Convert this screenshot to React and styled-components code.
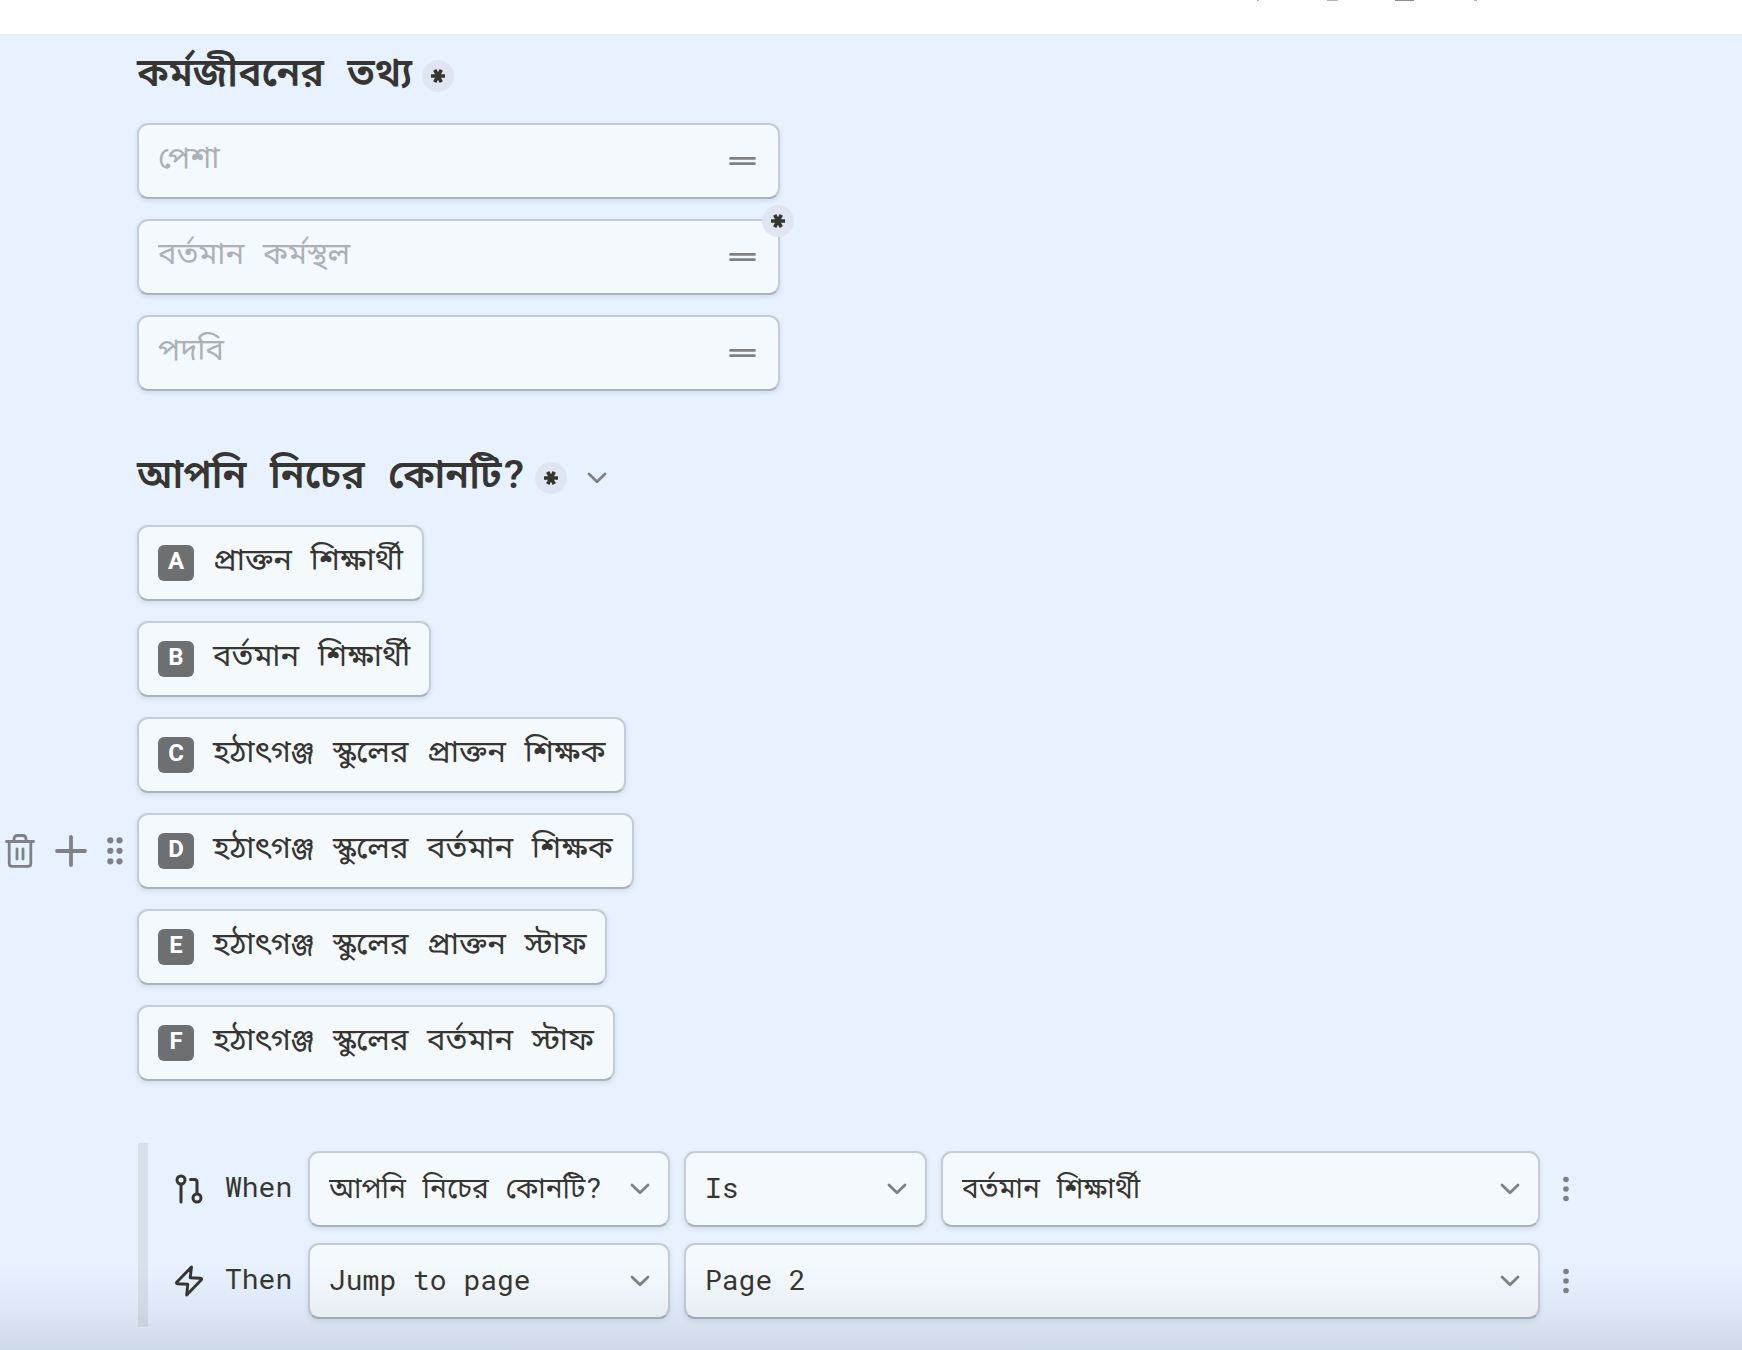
import React from "react";
import styled, { createGlobalStyle } from "styled-components";

const GlobalStyle = createGlobalStyle`
  *, *::before, *::after { box-sizing: border-box; }
  body {
    margin: 0;
    background: #e7f1ff;
    color: #37352f;
    font-family: "Roboto Mono", "Liberation Mono", "Noto Sans Bengali", "Noto Sans", monospace;
    font-size: 31px;
    line-height: 36px;
  }
  button, input, select { font: inherit; color: inherit; }
`;

const Page = styled.div`
  min-height: 100vh;
`;

const TopBar = styled.header`
  display: flex;
  justify-content: flex-end;
  align-items: flex-start;
  height: 34px;
  padding-right: 263px;
  background: #ffffff;
`;

const TopIcons = styled.svg`
  display: block;
`;

const Form = styled.main`
  padding: 14px 164px 22px 137px;
`;

const Section = styled.section`
  margin-bottom: ${(p) => p.$gap}px;
`;

const Heading = styled.div`
  display: flex;
  align-items: center;
  height: 56px;
  margin-bottom: 19px;
`;

const Title = styled.h2`
  margin: 0;
  padding-bottom: 10px;
  font-size: 39px;
  line-height: 46px;
  font-weight: 600;
  white-space: nowrap;
`;

const Required = styled.span`
  display: inline-flex;
  align-items: center;
  justify-content: center;
  width: 32px;
  height: 32px;
  margin-left: 10px;
  border-radius: 50%;
  background: #dfe6f2;
`;

const CornerRequired = styled(Required)`
  position: absolute;
  top: -16px;
  right: -16px;
  margin: 0;
`;

const IconButton = styled.button`
  display: inline-flex;
  align-items: center;
  justify-content: center;
  padding: 0;
  border: 0;
  background: none;
  color: #808182;
`;

const HeadingMenu = styled(IconButton)`
  width: 32px;
  height: 32px;
  margin-left: 14px;
`;

const Stack = styled.div`
  display: flex;
  flex-direction: column;
  align-items: flex-start;
  gap: 20px;
`;

const Card = styled.div`
  position: relative;
  display: flex;
  align-items: center;
  height: 76px;
  border: 2px solid #c4ccd6;
  border-bottom-color: #abb2ba;
  border-radius: 11px;
  background: #f4f9fe;
  box-shadow: 0 2px 5px rgba(60, 80, 110, 0.12);
`;

const Field = styled(Card)`
  width: 100%;
  max-width: 643px;
  padding: 0 22px 0 19px;
`;

const TextInput = styled.input`
  flex: 1;
  min-width: 0;
  height: 56px;
  padding: 0 0 10px;
  border: 0;
  outline: 0;
  background: none;
  &::placeholder { color: #adb1b5; opacity: 1; }
`;

const Option = styled(Card)`
  gap: 19px;
  padding: 0 19px;
`;

const Badge = styled.span`
  display: flex;
  align-items: center;
  justify-content: center;
  width: 36px;
  height: 36px;
  padding-bottom: 4px;
  border-radius: 6px;
  background: #6e6f71;
  color: #ffffff;
  font-family: Roboto, sans-serif;
  font-size: 24px;
  line-height: 28px;
  font-weight: 700;
`;

const OptionText = styled.span`
  padding-bottom: 10px;
  white-space: nowrap;
`;

const RowTools = styled.div`
  position: absolute;
  right: 100%;
  display: flex;
  align-items: center;
  gap: 20px;
  margin-right: 16px;
`;

const Logic = styled.div`
  display: flex;
  flex-direction: column;
  gap: 16px;
  margin-left: 1px;
  padding: 8px 0 8px 27px;
  border-left: 10px solid #d7e1eb;
  font-size: 28px;
`;

const Rule = styled.div`
  display: flex;
  align-items: center;
`;

const RuleLabel = styled.span`
  flex: none;
  width: 83px;
  margin-left: 22px;
  padding-bottom: 4px;
`;

const Picker = styled(Card)`
  flex: ${(p) => (p.$width ? `0 0 ${p.$width}px` : "1 1 0")};
  min-width: 0;
  margin-right: 14px;
  padding: 0 18px 0 19px;
`;

const Select = styled.select`
  flex: 1;
  min-width: 0;
  height: 48px;
  padding: 0 0 2px;
  border: 0;
  outline: 0;
  appearance: none;
  background: none;
`;

const RuleMenu = styled(IconButton)`
  flex: none;
  width: 24px;
  height: 36px;
`;

const BottomShade = styled.div`
  position: fixed;
  inset: auto 0 0 0;
  height: 84px;
  pointer-events: none;
  background: linear-gradient(rgba(80, 90, 100, 0), rgba(80, 90, 100, 0.05) 45%, rgba(80, 90, 100, 0.16));
`;

const Star = () => (
  <svg width="16" height="16" viewBox="0 0 16 16" stroke="#37352f" strokeWidth="3.6" aria-label="required" role="img">
    <path d="M1 8H15M4.7 1.8L11.3 14.2M11.3 1.8L4.7 14.2" />
  </svg>
);

const Chevron = () => (
  <svg width="20" height="12" viewBox="0 0 20 12" fill="none" stroke="#808182" strokeWidth="2.8" strokeLinecap="round" strokeLinejoin="round" aria-hidden="true">
    <path d="M2 2L10 9.7L18 2" />
  </svg>
);

const ShortText = () => (
  <svg width="27" height="8" viewBox="0 0 27 8" stroke="#808182" strokeWidth="2.7" strokeLinecap="round" aria-hidden="true">
    <path d="M1.5 1.4H25.5M1.5 6.6H25.5" />
  </svg>
);

const Trash = () => (
  <svg width="30" height="34" viewBox="0 0 30 34" fill="none" stroke="#808182" strokeWidth="2.8" strokeLinecap="round" strokeLinejoin="round">
    <path d="M1.5 7.5H28.5M4.2 7.5V29.5Q4.2 32.3 7 32.3H23Q25.8 32.3 25.8 29.5V7.5M9 7V5Q9 1.5 12.5 1.5H17.5Q21 1.5 21 5V7M12 15V25M18 15V25" />
  </svg>
);

const Plus = () => (
  <svg width="32" height="32" viewBox="0 0 32 32" stroke="#808182" strokeWidth="3.8" strokeLinecap="round">
    <path d="M16 2V30M2 16H30" />
  </svg>
);

const Grip = () => (
  <svg width="16" height="28" viewBox="0 0 16 28" fill="#808182">
    {[3.3, 13.8, 24.3].map((y) => (
      <g key={y}>
        <circle cx="3.3" cy={y} r="3.1" />
        <circle cx="12.5" cy={y} r="3.1" />
      </g>
    ))}
  </svg>
);

const Branch = () => (
  <svg width="28" height="30" viewBox="0 0 28 30" fill="none" stroke="#37352f" strokeWidth="3" strokeLinecap="round" strokeLinejoin="round" aria-hidden="true">
    <circle cx="6" cy="6" r="4" />
    <circle cx="22" cy="24" r="4" />
    <path d="M6 10.5V28M15.5 5.5H19.5Q22 5.5 22 8V19.5" />
  </svg>
);

const Bolt = () => (
  <svg width="28" height="32" viewBox="0 0 28 32" fill="none" stroke="#37352f" strokeWidth="2.9" strokeLinejoin="round" aria-hidden="true">
    <path d="M16.5 2L1.7 17.2Q1 18.6 2.5 18.8L12.8 19.2L11.7 30L26.4 14.8Q27 13.4 25.5 13.2L15.2 12.8Z" />
  </svg>
);

const Kebab = () => (
  <svg width="6" height="26" viewBox="0 0 6 26" fill="#808182">
    <circle cx="3" cy="3.5" r="2.8" />
    <circle cx="3" cy="13" r="2.8" />
    <circle cx="3" cy="22.5" r="2.8" />
  </svg>
);

const fields = [
  { text: "পেশা" },
  { text: "বর্তমান কর্মস্থল", required: true },
  { text: "পদবি" },
];

const options = [
  ["A", "প্রাক্তন শিক্ষার্থী"],
  ["B", "বর্তমান শিক্ষার্থী"],
  ["C", "হঠাৎগঞ্জ স্কুলের প্রাক্তন শিক্ষক"],
  ["D", "হঠাৎগঞ্জ স্কুলের বর্তমান শিক্ষক"],
  ["E", "হঠাৎগঞ্জ স্কুলের প্রাক্তন স্টাফ"],
  ["F", "হঠাৎগঞ্জ স্কুলের বর্তমান স্টাফ"],
];

const rules = [
  {
    label: "When",
    icon: <Branch />,
    picks: [
      { value: "আপনি নিচের কোনটি?", width: 362 },
      { value: "Is", width: 243 },
      { value: "বর্তমান শিক্ষার্থী" },
    ],
  },
  {
    label: "Then",
    icon: <Bolt />,
    picks: [{ value: "Jump to page", width: 362 }, { value: "Page 2" }],
  },
];

export default function App() {
  return (
    <Page>
      <GlobalStyle />
      <TopBar>
        <TopIcons width="222" height="1" viewBox="0 0 222 1" aria-hidden="true">
          <path fill="#b5b5b2" d="M0 0h2v1h-2zM70 0h11v1h-11zM217 0h3v1h-3z" />
          <path fill="#8f8f8b" d="M138 0h19v1h-19z" />
        </TopIcons>
      </TopBar>
      <Form>
        <Section $gap={59}>
          <Heading>
            <Title>কর্মজীবনের তথ্য</Title>
            <Required><Star /></Required>
          </Heading>
          <Stack>
            {fields.map((f) => (
              <Field key={f.text}>
                <TextInput type="text" placeholder={f.text} aria-label={f.text} />
                <ShortText />
                {f.required && <CornerRequired><Star /></CornerRequired>}
              </Field>
            ))}
          </Stack>
        </Section>
        <Section $gap={62}>
          <Heading>
            <Title>আপনি নিচের কোনটি?</Title>
            <Required><Star /></Required>
            <HeadingMenu type="button" aria-label="Question options"><Chevron /></HeadingMenu>
          </Heading>
          <Stack>
            {options.map(([key, text]) => (
              <Option key={key}>
                {key === "D" && (
                  <RowTools>
                    <IconButton type="button" aria-label="Delete"><Trash /></IconButton>
                    <IconButton type="button" aria-label="Add"><Plus /></IconButton>
                    <IconButton type="button" aria-label="Move"><Grip /></IconButton>
                  </RowTools>
                )}
                <Badge>{key}</Badge>
                <OptionText>{text}</OptionText>
              </Option>
            ))}
          </Stack>
        </Section>
        <Logic>
          {rules.map((rule) => (
            <Rule key={rule.label}>
              {rule.icon}
              <RuleLabel>{rule.label}</RuleLabel>
              {rule.picks.map((p) => (
                <Picker key={p.value} $width={p.width}>
                  <Select aria-label={`${rule.label}: ${p.value}`} defaultValue={p.value}>
                    <option>{p.value}</option>
                  </Select>
                  <Chevron />
                </Picker>
              ))}
              <RuleMenu type="button" aria-label="Rule options"><Kebab /></RuleMenu>
            </Rule>
          ))}
        </Logic>
      </Form>
      <BottomShade />
    </Page>
  );
}
